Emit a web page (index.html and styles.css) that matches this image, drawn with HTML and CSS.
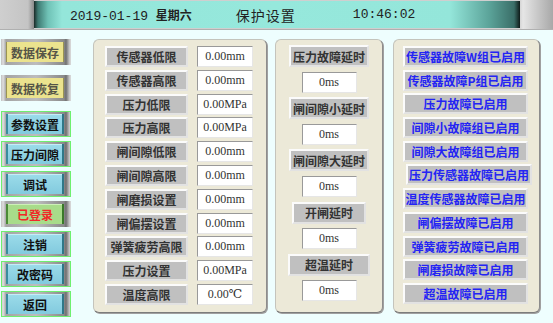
FILE: index.html
```html
<!DOCTYPE html>
<html lang="zh">
<head>
    <meta charset="UTF-8">
    <title>保护设置</title>
    <link rel="stylesheet" href="styles.css">
</head>
<body>
    <header class="topbar">
        <div class="topbar-inner">
            <span class="date">2019-01-19 <b>星期六</b></span>
            <span class="title">保护设置</span>
            <span class="time">10:46:02</span>
        </div>
    </header>

    <div class="main">
        <div class="side">
            <div class="btn yellow"><span>数据保存</span></div>
            <div class="btn yellow gap-big"><span>数据恢复</span></div>
            <div class="btn teal outlined gap-big"><span>参数设置</span></div>
            <div class="btn teal outlined"><span>压力间隙</span></div>
            <div class="btn teal outlined"><span>调试</span></div>
            <div class="btn green"><span>已登录</span></div>
            <div class="btn teal outlined"><span>注销</span></div>
            <div class="btn teal outlined"><span>改密码</span></div>
            <div class="btn teal outlined"><span>返回</span></div>
        </div>

        <div class="panel limits">
            <div class="lbl">传感器低限</div><div class="val">0.00mm</div>
            <div class="lbl">传感器高限</div><div class="val">0.00mm</div>
            <div class="lbl">压力低限</div><div class="val">0.00MPa</div>
            <div class="lbl">压力高限</div><div class="val">0.00MPa</div>
            <div class="lbl">闸间隙低限</div><div class="val">0.00mm</div>
            <div class="lbl">闸间隙高限</div><div class="val">0.00mm</div>
            <div class="lbl">闸磨损设置</div><div class="val">0.00mm</div>
            <div class="lbl">闸偏摆设置</div><div class="val">0.00mm</div>
            <div class="lbl">弹簧疲劳高限</div><div class="val">0.00mm</div>
            <div class="lbl">压力设置</div><div class="val">0.00MPa</div>
            <div class="lbl">温度高限</div><div class="val">0.00℃</div>
        </div>

        <div class="panel delays">
            <div class="lbl">压力故障延时</div><div class="val">0ms</div>
            <div class="lbl">闸间隙小延时</div><div class="val">0ms</div>
            <div class="lbl">闸间隙大延时</div><div class="val">0ms</div>
            <div class="lbl short">开闸延时</div><div class="val">0ms</div>
            <div class="lbl wide">超温延时</div><div class="val">0ms</div>
        </div>

        <div class="panel faults">
            <div class="item">传感器故障W组已启用</div>
            <div class="item">传感器故障P组已启用</div>
            <div class="item">压力故障已启用</div>
            <div class="item">间隙小故障组已启用</div>
            <div class="item">间隙大故障组已启用</div>
            <div class="item shifted">压力传感器故障已启用</div>
            <div class="item">温度传感器故障已启用</div>
            <div class="item">闸偏摆故障已启用</div>
            <div class="item">弹簧疲劳故障已启用</div>
            <div class="item">闸磨损故障已启用</div>
            <div class="item">超温故障已启用</div>
        </div>
    </div>
</body>
</html>
```

FILE: styles.css
```css
body {
    margin: 0;
    width: 553px;
    height: 323px;
    overflow: hidden;
    background-color: #eefefe;
    font-family: "Noto Sans CJK SC", sans-serif;
}

/* top bar */
.topbar {
    height: 30px;
    box-sizing: border-box;
    padding: 1px 33px 1px 34px;
    background: linear-gradient(90deg, #cfcfcf 0, #c4c4c4 28px, #8a8a8a 34px, #cfcfcf 34px, #cfcfcf calc(100% - 34px), #e6e6e6 calc(100% - 30px), #a8a8a8 100%);
    border-bottom: 1px solid #b0b0b0;
}
.topbar-inner {
    height: 100%;
    display: flex;
    align-items: center;
    background: linear-gradient(90deg, #1a2a28 0, #3e7a72 4px, #6fc2b6 14px, #94e6da 28px, #96e8dc 50%, #94e6da calc(100% - 70px), #5aa298 calc(100% - 30px), #3a6e68 calc(100% - 6px), #0e1a18 100%);
    color: #222;
}
.date {
    margin-left: 36px;
    font-family: "Liberation Mono", "Noto Sans CJK SC", monospace;
    font-size: 13px;
}
.date b {
    font-family: "Noto Sans CJK SC", sans-serif;
    font-size: 12px;
}
.title {
    margin-left: 44px;
    font-size: 14px;
    letter-spacing: 1px;
}
.time {
    margin-left: 57px;
    font-family: "Liberation Mono", monospace;
    font-size: 13px;
}

.main {
    display: flex;
    align-items: flex-start;
    padding: 9px 0 0 1px;
}

/* left buttons */
.side {
    width: 70px;
    margin-right: 22px;
    display: flex;
    flex-direction: column;
}
.btn {
    height: 26px;
    box-sizing: border-box;
    margin-top: 4px;
    border: 1px solid transparent;
    padding: 2px 6px 2px 4px;
    background: linear-gradient(90deg, #c8c8c8 0, #e2e2e2 1px, #a4a4a4 4px, #bdbdbd 50%, #8a8a8a calc(100% - 6px), #707070 calc(100% - 4px), #d4d4d4 100%);
}
.btn:first-child {
    margin-top: 0;
}
.btn.gap-big {
    margin-top: 10px;
}
.btn.outlined {
    border-color: #6ef06e;
}
.btn span {
    height: 100%;
    display: flex;
    align-items: center;
    justify-content: center;
    font-size: 12px;
    font-weight: bold;
}
.yellow span {
    background-color: #ebe38e;
    box-shadow: inset 1px 0 0 #9a9450, inset -1px 0 0 #9a9450;
    color: #555548;
}
.teal span {
    background: linear-gradient(180deg, #9cdcea, #82cade);
    box-shadow: inset 2px 0 0 #3a8c9c, inset -2px 0 0 #2e7888, inset 0 1px 0 #c4eef6;
    color: #111;
}
.green span {
    background-color: #a8dc8a;
    box-shadow: inset 2px 0 0 #4a8a36, inset -2px 0 0 #3a7a2a, inset 0 1px 0 #cdf0b8;
    color: #f02828;
}

/* panels */
.panel {
    height: 274px;
    box-sizing: border-box;
    background-color: #ece9d8;
    border: 1px solid;
    border-color: #c4c4bc #8c8c8c #7c7c7c #c4c4bc;
    border-radius: 6px;
    box-shadow: 1px 1px 0 #a0a0a0;
}
.lbl,
.item {
    height: 21px;
    box-sizing: border-box;
    background-color: #c0c0c0;
    border: 2px solid;
    border-color: #fbfbfb #e2e2e2 #e2e2e2 #fbfbfb;
    display: flex;
    align-items: center;
    justify-content: center;
    font-size: 12px;
    font-weight: bold;
    color: #333;
}
.val {
    height: 21px;
    box-sizing: border-box;
    background-color: #fff;
    border: 1px solid;
    border-color: #999 #e6e6e6 #e6e6e6 #999;
    display: flex;
    align-items: center;
    justify-content: center;
    font-family: "Liberation Serif", "DejaVu Serif", serif;
    font-size: 12px;
    color: #333;
}

.limits {
    width: 174px;
    margin-right: 8px;
    padding: 6px 0 0 11px;
    display: grid;
    grid-template-columns: 83px 56px;
    grid-auto-rows: 21px;
    column-gap: 9px;
    row-gap: 2.8px;
    align-content: start;
}

.delays {
    width: 108px;
    margin-right: 10px;
    padding-top: 5px;
    display: flex;
    flex-direction: column;
    align-items: center;
    gap: 4.6px;
}
.delays .lbl {
    width: 80px;
    height: 22px;
}
.delays .lbl.short {
    width: 74px;
}
.delays .lbl.wide {
    width: 82px;
}
.delays .val {
    width: 55px;
}

.faults {
    width: 147px;
    padding: 6px 0 0 9px;
    display: flex;
    flex-direction: column;
    gap: 2.7px;
}
.item {
    width: 125px;
    color: #2424f4;
}
.item.shifted {
    margin-left: 3px;
    width: 126px;
}
```
